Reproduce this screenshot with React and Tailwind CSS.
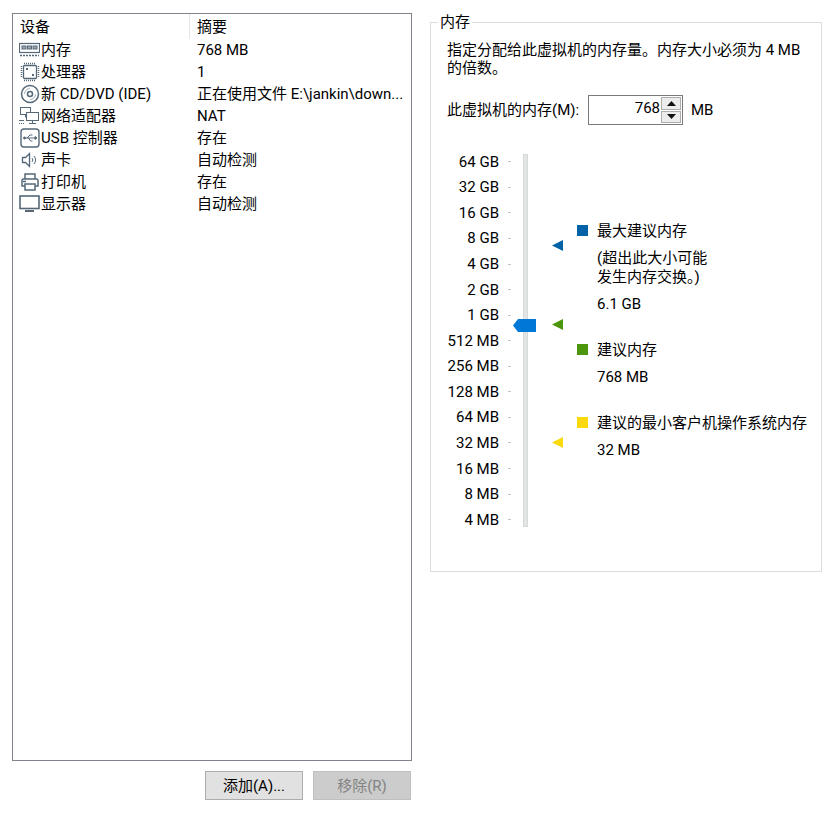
const FONT = { fontFamily: 'Roboto, "Noto Sans CJK SC", sans-serif' };

const STROKE = '#566878';

function IconMemory() {
  return (
    <svg width="21" height="16" viewBox="0 0 21 16" fill="none" stroke={STROKE}>
      <rect x="0.5" y="1.5" width="20" height="9" strokeWidth="1.200" />
      <rect x="3" y="4" width="4" height="3" fill="#9aa7b2" />
      <rect x="8.5" y="4" width="4" height="3" fill="#9aa7b2" />
      <rect x="14" y="4" width="4" height="3" fill="#9aa7b2" />
      <path d="M1 13.500h19" strokeDasharray="2 1" strokeWidth="1.500" />
    </svg>
  );
}

function IconCpu() {
  return (
    <svg width="20" height="20" viewBox="0 0 20 20" fill="none" stroke={STROKE}>
      <rect x="3.500" y="3.500" width="13" height="13" rx="1" strokeWidth="1.300" />
      <rect x="6" y="6" width="2" height="2" fill={STROKE} stroke="none" />
      <rect x="12" y="12" width="2" height="2" fill={STROKE} stroke="none" />
      <path d="M4 1.500h12M4 18.500h12M1.500 4v12M18.500 4v12" strokeDasharray="1 1" strokeWidth="1.500" />
    </svg>
  );
}

function IconDisc() {
  return (
    <svg width="20" height="20" viewBox="0 0 20 20" fill="none" stroke={STROKE}>
      <circle cx="10" cy="10" r="8.500" strokeWidth="1.500" />
      <circle cx="10" cy="10" r="2.500" strokeWidth="1.500" />
      <path d="M10 4.500A5.500 5.500 0 0 0 4.500 10M15.500 10a5.500 5.500 0 0 1-5.500 5.500" stroke="#a9b4bd" />
    </svg>
  );
}

function IconNetwork() {
  return (
    <svg width="21" height="18" viewBox="0 0 21 18" fill="none" stroke={STROKE}>
      <rect x="1.500" y="0.500" width="10" height="7" fill="white" />
      <path d="M6.500 7.500v3M0 13.500h5" />
      <rect x="7.500" y="5.500" width="12" height="8" fill="white" />
      <path d="M13.500 13.500v2.500M10 16.500h7" />
      <path d="M0 16.500h6" strokeDasharray="1 1" />
    </svg>
  );
}

function IconUsb() {
  return (
    <svg width="20" height="20" viewBox="0 0 20 20" fill="none" stroke={STROKE}>
      <rect x="1" y="1" width="18" height="18" rx="3" strokeWidth="1.400" />
      <path d="M4 10h11M7 10l3-3h2.500M8.500 10l2 3h2" />
      <path d="M15 8.500l2 1.500-2 1.500z" fill={STROKE} />
      <circle cx="4.500" cy="10" r="1" fill={STROKE} />
    </svg>
  );
}

function IconSound() {
  return (
    <svg width="18" height="18" viewBox="0 0 18 18" fill="none" stroke={STROKE}>
      <path d="M1.500 6.500h3l4-4v13l-4-4h-3z" strokeWidth="1.300" />
      <path d="M11 7a3 3 0 0 1 0 4M13 5a6 6 0 0 1 0 8" />
    </svg>
  );
}

function IconPrinter() {
  return (
    <svg width="20" height="20" viewBox="0 0 20 20" fill="none" stroke={STROKE} strokeWidth="1.500">
      <path d="M5 7V2h10v5" />
      <path d="M5 14H2V8.500A1.500 1.500 0 0 1 3.500 7h13A1.500 1.500 0 0 1 18 8.500V14h-3" />
      <rect x="5" y="12" width="10" height="6" />
      <path d="M3 9.500h3" />
    </svg>
  );
}

function IconMonitor() {
  return (
    <svg width="21" height="18" viewBox="0 0 21 18" fill="none" stroke={STROKE}>
      <rect x="1" y="1" width="19" height="12.500" strokeWidth="1.600" />
      <path d="M6 16h9" strokeWidth="2" />
    </svg>
  );
}

const DEVICES = [
  { icon: IconMemory, name: '内存', summary: '768 MB' },
  { icon: IconCpu, name: '处理器', summary: '1' },
  { icon: IconDisc, name: '新 CD/DVD (IDE)', summary: '正在使用文件 E:\\jankin\\down...' },
  { icon: IconNetwork, name: '网络适配器', summary: 'NAT' },
  { icon: IconUsb, name: 'USB 控制器', summary: '存在' },
  { icon: IconSound, name: '声卡', summary: '自动检测' },
  { icon: IconPrinter, name: '打印机', summary: '存在' },
  { icon: IconMonitor, name: '显示器', summary: '自动检测' },
];

const SCALE = [
  '64 GB', '32 GB', '16 GB', '8 GB', '4 GB', '2 GB', '1 GB', '512 MB',
  '256 MB', '128 MB', '64 MB', '32 MB', '16 MB', '8 MB', '4 MB',
];

function Pointer({ className, fill }) {
  return (
    <svg className={`absolute left-[552px] ${className}`} width="12" height="11" viewBox="0 0 12 11">
      <path d="M0 5.500L11 0V11Z" fill={fill} />
    </svg>
  );
}

function Spinner() {
  return (
    <div className="flex flex-col w-[20px] h-full gap-px bg-white">
      <div className="flex-1 flex items-center justify-center bg-[#ececec] border border-[#adadad]">
        <svg width="9" height="5" viewBox="0 0 9 5"><path d="M4.500 0L9 5H0Z" fill="#111" /></svg>
      </div>
      <div className="flex-1 flex items-center justify-center bg-[#ececec] border border-[#adadad]">
        <svg width="9" height="5" viewBox="0 0 9 5"><path d="M0 0H9L4.500 5Z" fill="#111" /></svg>
      </div>
    </div>
  );
}

export default function App() {
  return (
    <div className="w-[834px] h-[814px] bg-white text-[15px] leading-[18px] text-black flex gap-[18px] pl-[12px] pt-[13px] relative overflow-hidden" style={FONT}>
      <div className="w-[400px] flex flex-col">
        <div className="h-[748px] border border-[#82828c] flex flex-col">
          <div className="h-[25px] flex items-center shrink-0">
            <div className="w-[176px] pl-[7px]">设备</div>
            <div className="h-full w-px bg-[#e5e5e5]" />
            <div className="pl-[7px]">摘要</div>
          </div>
          {DEVICES.map((d) => (
            <div key={d.name} className="h-[22px] flex items-center shrink-0">
              <div className="w-[28px] h-full flex items-center justify-center pl-[5px] shrink-0">
                <d.icon />
              </div>
              <div className="w-[156px] whitespace-nowrap">{d.name}</div>
              <div className="whitespace-nowrap">{d.summary}</div>
            </div>
          ))}
        </div>
        <div className="flex justify-end gap-[10px] mt-[10px] mr-px">
          <button className="w-[98px] h-[29px] bg-[#e1e1e1] border border-[#adadad]">添加(A)...</button>
          <button className="w-[98px] h-[29px] bg-[#cccccc] border border-[#bfbfbf] text-[#838383]">移除(R)</button>
        </div>
      </div>

      <fieldset className="w-[392px] min-w-0 h-[559px] border border-[#dcdcdc] px-[16px] pb-0">
        <legend className="-ml-[9px] px-[2px]">内存</legend>
        <p className="mt-[10px] w-[365px]">指定分配给此虚拟机的内存量。内存大小必须为 4 MB 的倍数。</p>
        <div className="flex items-center mt-[18px] h-[30px]">
          <span className="w-[141px] whitespace-nowrap">此虚拟机的内存(M):</span>
          <div className="w-[95px] h-[30px] border border-[#7a7a7a] flex justify-end items-stretch p-px gap-px">
            <span className="flex-1 text-right mt-[2px]">768</span>
            <Spinner />
          </div>
          <span className="ml-[8px]">MB</span>
        </div>
        <div className="flex mt-[24px] -ml-[16px]">
          <div className="w-[80px] shrink-0 flex flex-col">
            {SCALE.map((s) => (
              <div key={s} className="h-[25.57px] flex items-center justify-end whitespace-nowrap">
                <span>{s}</span>
                <span className="ml-[9px] w-[3px] h-px bg-[#c4c4c4]" />
              </div>
            ))}
          </div>
          <div className="w-[5px] shrink-0 h-[373px] mt-[5px] bg-[#e3e5e5] border border-[#d6d9d9] ml-[12px]" />
          <div className="ml-[49px] shrink-0 flex flex-col">
            <div className="flex mt-[73px]">
              <span className="w-[11px] h-[11px] mt-[3px] bg-[#0063a8] mr-[9px]" />
              <div>
                <div>最大建议内存</div>
                <div className="mt-[9px] leading-[19px]">(超出此大小可能<br />发生内存交换。)</div>
                <div className="mt-[8px]">6.1 GB</div>
              </div>
            </div>
            <div className="flex mt-[28px]">
              <span className="w-[11px] h-[11px] mt-[3px] bg-[#4c960e] mr-[9px]" />
              <div>
                <div>建议内存</div>
                <div className="mt-[9px]">768 MB</div>
              </div>
            </div>
            <div className="flex mt-[28px]">
              <span className="w-[11px] h-[11px] mt-[3px] bg-[#fcd90f] mr-[9px]" />
              <div>
                <div className="whitespace-nowrap">建议的最小客户机操作系统内存</div>
                <div className="mt-[9px]">32 MB</div>
              </div>
            </div>
          </div>
        </div>
      </fieldset>

      <Pointer className="top-[240px]" fill="#0063a8" />
      <Pointer className="top-[319px]" fill="#4c960e" />
      <Pointer className="top-[437px]" fill="#fcd90f" />
      <svg className="absolute left-[513px] top-[319px]" width="23" height="13" viewBox="0 0 23 13">
        <path d="M0 6.500L5 0H23V13H5Z" fill="#0078d7" />
      </svg>
    </div>
  );
}
